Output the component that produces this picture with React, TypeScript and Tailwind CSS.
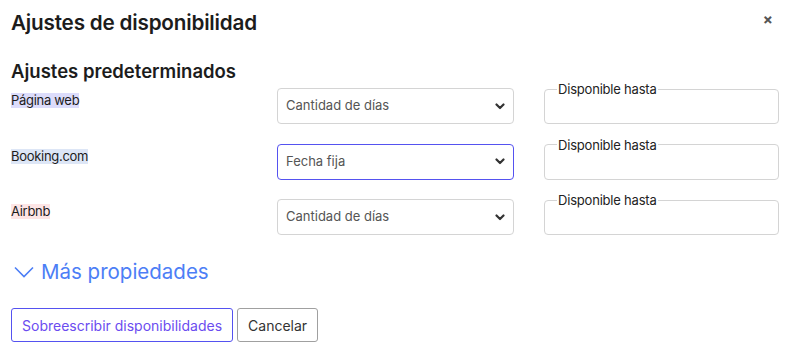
const rows = [
  { label: "Página web", hl: "bg-[#dcdcfb]", value: "Cantidad de días", active: false },
  { label: "Booking.com", hl: "bg-[#dde6f6]", value: "Fecha fija", active: true },
  { label: "Airbnb", hl: "bg-[#fde5e5]", value: "Cantidad de días", active: false },
];

function Chevron() {
  return (
    <svg width="10" height="7" viewBox="0 0 10 7" fill="none">
      <path d="M1.5 1.5 5 5l3.5-3.5" stroke="#333" strokeWidth="2.2" strokeLinecap="round" strokeLinejoin="round" />
    </svg>
  );
}

export default function App() {
  return (
    <div
      className="w-[792px] h-[347px] bg-white text-[#1c1c1c] pl-[11px] pr-[13px] pt-[9px]"
      style={{ fontFamily: "Inter, 'Noto Sans', sans-serif" }}
    >
      {/* cabecera */}
      <div className="flex items-start justify-between">
        <h1 className="text-[20.7px] leading-[28px] font-semibold tracking-[-0.2px]">Ajustes de disponibilidad</h1>
        <button className="mt-[3px] mr-[6px] text-[#555] text-[15px] font-bold leading-none">×</button>
      </div>

      <h2 className="mt-[22px] text-[18.5px] leading-[24px] font-semibold">Ajustes predeterminados</h2>

      {/* filas */}
      <div className="mt-[5px] flex flex-col gap-[19.5px]">
        {rows.map((r) => (
          <div key={r.label} className="grid grid-cols-[266px_237px_1fr] items-start">
            <div className="-mt-[1px]">
              <span className={`${r.hl} text-[13px] leading-[15px] tracking-[-0.3px] inline-block`}>{r.label}</span>
            </div>
            <div
              className={`h-[36px] rounded-[4px] border flex items-center justify-between pl-[8px] pr-[8px] text-[13px] text-[#555] ${
                r.active ? "border-[#5552f0]" : "border-[#d4d4d4]"
              }`}
            >
              <span>{r.value}</span>
              <Chevron />
            </div>
            <fieldset className="ml-[30px] -mt-[7px] h-[43px] rounded-[4px] border border-[#d4d4d4] px-[12px]">
              <legend className="px-[1px] text-[13px] leading-[16px] tracking-[-0.2px] text-[#222]">Disponible hasta</legend>
            </fieldset>
          </div>
        ))}
      </div>

      {/* más propiedades */}
      <div className="mt-[24px] flex items-center gap-[7px] text-[#4c7ef6] pl-[3px]">
        <svg width="20" height="12" viewBox="0 0 20 12" fill="none">
          <path d="M1 1.5 10 10.5 19 1.5" stroke="#4c7ef6" strokeWidth="1.6" />
        </svg>
        <span className="text-[20.5px] leading-[26px]">Más propiedades</span>
      </div>

      {/* acciones */}
      <div className="mt-[23px] flex gap-[4px]">
        <button className="h-[34px] px-[10px] rounded-[3px] border border-[#5552f0] text-[#6b4cf0] text-[14px]">
          Sobreescribir disponibilidades
        </button>
        <button className="h-[34px] px-[10px] rounded-[3px] border border-[#a0a0a0] text-[#333] text-[14px]">
          Cancelar
        </button>
      </div>
    </div>
  );
}
